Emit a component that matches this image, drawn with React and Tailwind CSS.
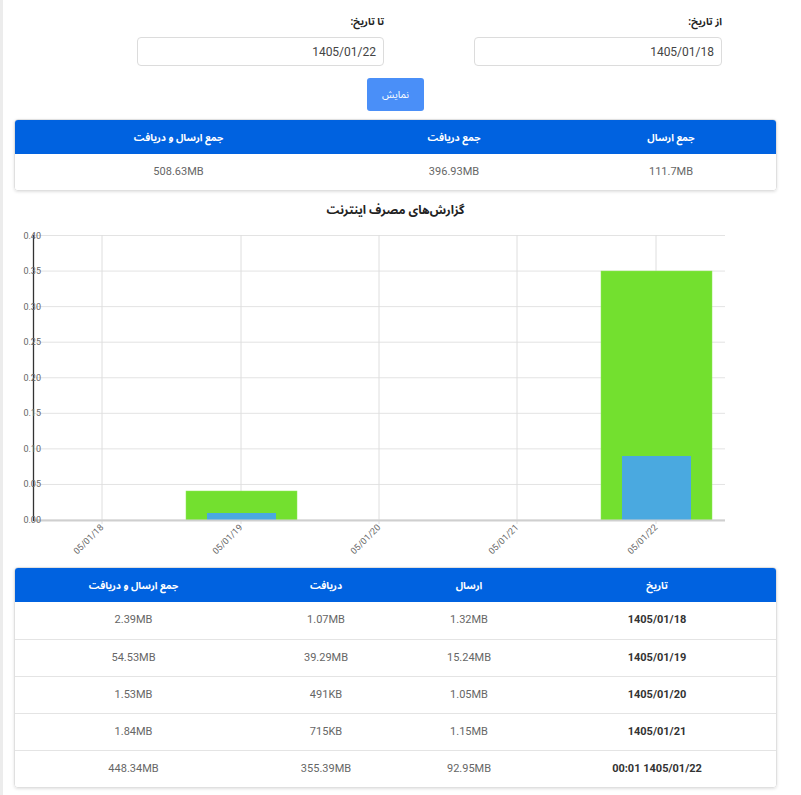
import React from "react";

const rows = [
  ["1405/01/18", "1.32MB", "1.07MB", "2.39MB"],
  ["1405/01/19", "15.24MB", "39.29MB", "54.53MB"],
  ["1405/01/20", "1.05MB", "491KB", "1.53MB"],
  ["1405/01/21", "1.15MB", "715KB", "1.84MB"],
  ["00:01 1405/01/22", "92.95MB", "355.39MB", "448.34MB"],
];

function Chart() {
  const yOf = (v) => 298 - v * 711.25;
  const ticks = [0, 0.05, 0.1, 0.15, 0.2, 0.25, 0.3, 0.35, 0.4];
  const xs = [88, 227, 365, 503, 642];
  const labels = ["05/01/18", "05/01/19", "05/01/20", "05/01/21", "05/01/22"];
  return (
    <svg width="763" height="345" viewBox="0 0 763 345" className="block">
      {ticks.map((t) => (
        <line key={t} x1="19" x2="711" y1={yOf(t)} y2={yOf(t)} stroke="#e3e3e3" strokeWidth="1" />
      ))}
      {xs.map((x) => (
        <line key={x} x1={x} x2={x} y1="13" y2="302" stroke="#dedede" strokeWidth="1" />
      ))}
      <rect x="172" y="269" width="111" height="29" fill="#73e02f" stroke="#8fe85a" strokeWidth="0.5" />
      <rect x="193" y="291" width="69" height="7" fill="#4aa9e0" />
      <rect x="587" y="49" width="111" height="249" fill="#73e02f" stroke="#8fe85a" strokeWidth="0.5" />
      <rect x="608" y="234" width="69" height="64" fill="#4aa9e0" />
      <line x1="19" x2="711" y1="298.5" y2="298.5" stroke="#cfcfcf" strokeWidth="2" />
      <line x1="19.5" x2="19.5" y1="13" y2="299" stroke="#333" strokeWidth="1.3" />
      {ticks.map((t) => (
        <text key={t} x="27" y={yOf(t) + 3} textAnchor="end" fontSize="9" fill="#666" fontFamily="Roboto, 'DejaVu Sans', sans-serif">
          {t.toFixed(2)}
        </text>
      ))}
      {xs.map((x, i) => (
        <text
          key={x}
          x={x + 2}
          y="306"
          textAnchor="end"
          fontSize="9"
          fill="#666"
          fontFamily="Roboto, 'DejaVu Sans', sans-serif"
          transform={`rotate(-45 ${x + 2} 306)`}
        >
          {labels[i]}
        </text>
      ))}
    </svg>
  );
}

export default function App() {
  return (
    <div
      dir="rtl"
      className="min-h-screen bg-white border-l-[3px] border-[#ececec] pl-[11px] pr-[24px] pt-[15px] text-[#333] font-['Roboto','Noto_Sans_Arabic','Noto_Naskh_Arabic','DejaVu_Sans',sans-serif]"
    >
      <div className="w-[763px]">
        <div className="flex">
          <div className="mr-[55px] w-[248px]">
            <div className="text-[10px] font-bold leading-[14px] text-[#222]">از تاریخ:</div>
            <div className="mt-[8px] h-[29px] rounded-[4px] border border-[#dcdcdc] bg-white px-[7px] flex items-center text-[12px] text-[#444]">
              1405/01/18
            </div>
          </div>
          <div className="mr-[90px] w-[247px]">
            <div className="text-[10px] font-bold leading-[14px] text-[#222]">تا تاریخ:</div>
            <div className="mt-[8px] h-[29px] rounded-[4px] border border-[#dcdcdc] bg-white px-[7px] flex items-center text-[12px] text-[#444]">
              1405/01/22
            </div>
          </div>
        </div>
        <div className="flex justify-center mt-[12px]">
          <div className="w-[57px] h-[33px] rounded-[3px] bg-[#4a8ff8] text-white text-[10px] flex items-center justify-center">
            نمایش
          </div>
        </div>

        <div className="mt-[8px] rounded-[4px] border border-[#e0e0e0] shadow-[0_1px_3px_rgba(0,0,0,0.12)] overflow-hidden">
          <div className="grid grid-cols-[210px_224px_1fr] bg-[#0062e0] h-[34px] items-center text-white text-[10px] font-bold text-center">
            <div>جمع ارسال</div>
            <div>جمع دریافت</div>
            <div>جمع ارسال و دریافت</div>
          </div>
          <div className="grid grid-cols-[210px_224px_1fr] h-[36px] items-center text-[#666] text-[11px] text-center bg-white">
            <div>111.7MB</div>
            <div>396.93MB</div>
            <div>508.63MB</div>
          </div>
        </div>

        <div className="mt-[12px] text-center text-[12px] font-bold text-[#222] leading-[14px]">
          گزارش‌های مصرف اینترنت
        </div>
        <div className="mt-[5px]" dir="ltr">
          <Chart />
        </div>

        <div className="rounded-[4px] border border-[#e0e0e0] shadow-[0_1px_3px_rgba(0,0,0,0.12)] overflow-hidden">
          <div className="grid grid-cols-[238px_138px_148px_1fr] bg-[#0062e0] h-[34px] items-center text-white text-[10px] font-bold text-center">
            <div>تاریخ</div>
            <div>ارسال</div>
            <div>دریافت</div>
            <div>جمع ارسال و دریافت</div>
          </div>
          {rows.map((r, i) => (
            <div
              key={i}
              className={`grid grid-cols-[238px_138px_148px_1fr] h-[37px] items-center text-[11px] text-center bg-white ${i > 0 ? "border-t border-[#e4e4e4]" : ""}`}
            >
              <div dir="ltr" className="font-bold text-[#333] text-[11px]">{r[0]}</div>
              <div className="text-[#666]">{r[1]}</div>
              <div className="text-[#666]">{r[2]}</div>
              <div className="text-[#666]">{r[3]}</div>
            </div>
          ))}
        </div>
      </div>
    </div>
  );
}
